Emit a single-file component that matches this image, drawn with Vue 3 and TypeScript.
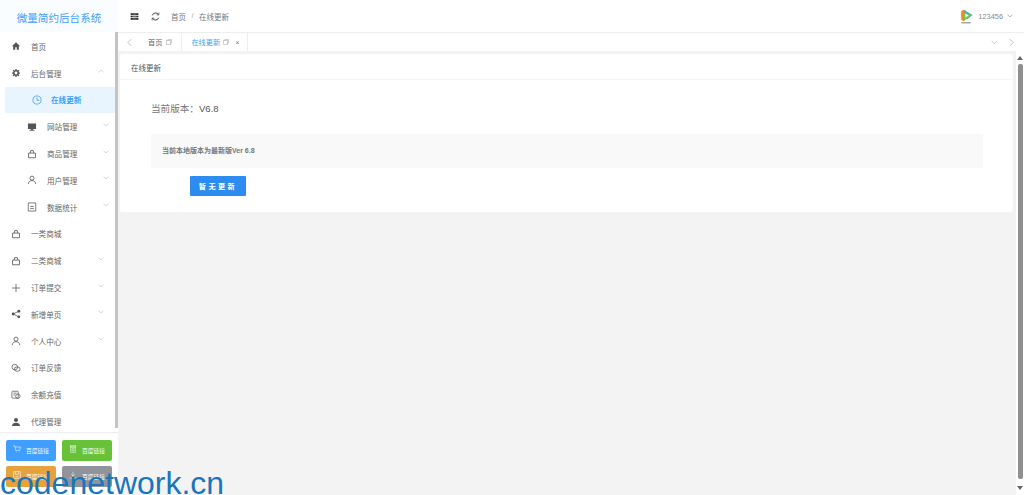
<script setup lang="ts">
interface MenuItem {
  label: string
  icon: string
  arrow?: "up" | "down"
  sub?: boolean
  active?: boolean
}

const menu: MenuItem[] = [
  { label: "首页", icon: "home" },
  { label: "后台管理", icon: "gear", arrow: "up" },
  { label: "在线更新", icon: "clock", sub: true, active: true },
  { label: "网站管理", icon: "monitor", arrow: "down", sub: true },
  { label: "商品管理", icon: "bag", arrow: "down", sub: true },
  { label: "用户管理", icon: "user", arrow: "down", sub: true },
  { label: "数据统计", icon: "doc", arrow: "down", sub: true },
  { label: "一类商城", icon: "bag" },
  { label: "二类商城", icon: "bag", arrow: "down" },
  { label: "订单提交", icon: "plus", arrow: "down" },
  { label: "新增单页", icon: "share", arrow: "down" },
  { label: "个人中心", icon: "user", arrow: "down" },
  { label: "订单反馈", icon: "chat" },
  { label: "余额充值", icon: "wallet" },
  { label: "代理管理", icon: "person" },
]

const quick = [
  { color: "#409eff", icon: "cart" },
  { color: "#67c23a", icon: "cup" },
  { color: "#e6a23c", icon: "save" },
  { color: "#909399", icon: "down" },
]
</script>

<template>
  <div class="page">
    <aside class="side">
      <div class="brand">微量简约后台系统</div>
      <div class="menu-wrap">
        <ul class="menu">
          <li v-for="item in menu" :key="item.label" class="row" :class="{ sub: item.sub, active: item.active }">
            <svg class="ico" viewBox="0 0 16 16">
              <path v-if="item.icon === 'home'" d="M8 2 1.500 8.500h2V14h3.300v-4h2.400v4h3.300V8.500h2z" fill="currentColor" />
              <g v-else-if="item.icon === 'gear'">
                <circle cx="8" cy="8" r="3.500" fill="none" stroke="currentColor" stroke-width="2.400" />
                <path d="M8 1.500V4M8 12v2.500M1.500 8H4M12 8h2.500M3.400 3.400l1.700 1.700M10.900 10.900l1.700 1.700M3.400 12.600l1.700-1.700M10.900 5.100l1.700-1.700" stroke="currentColor" stroke-width="2" />
              </g>
              <g v-else-if="item.icon === 'clock'" fill="none" stroke="currentColor" stroke-width="1.300">
                <circle cx="8" cy="8" r="6.500" />
                <path d="M8 4v4.500h3.500" />
              </g>
              <path v-else-if="item.icon === 'monitor'" d="M1.500 2.500h13V11H9.500v1.500H12V14H4v-1.500h2.500V11h-5z" fill="currentColor" />
              <path v-else-if="item.icon === 'bag'" d="M2.500 6.500h11V14h-11zM5 6.500 6 2.500h4l1 4" fill="none" stroke="currentColor" stroke-width="1.300" />
              <g v-else-if="item.icon === 'user'" fill="none" stroke="currentColor" stroke-width="1.300">
                <circle cx="8" cy="5" r="3.200" />
                <path d="M2 14.500c.5-3.800 2.800-5.500 6-5.500s5.500 1.700 6 5.500" />
              </g>
              <path v-else-if="item.icon === 'doc'" d="M2 1.500h12v13H2zM5 7h6M5 10.500h6" fill="none" stroke="currentColor" stroke-width="1.200" />
              <path v-else-if="item.icon === 'plus'" d="M8 1.500v13M1.500 8h13" fill="none" stroke="currentColor" stroke-width="1.200" />
              <g v-else-if="item.icon === 'share'" fill="currentColor">
                <circle cx="3.500" cy="8" r="2.300" />
                <circle cx="12.500" cy="3.500" r="2.300" />
                <circle cx="12.500" cy="12.500" r="2.300" />
                <path d="M12.500 3.500 3.500 8l9 4.500" fill="none" stroke="currentColor" stroke-width="1.200" />
              </g>
              <g v-else-if="item.icon === 'chat'" fill="none" stroke="currentColor" stroke-width="1.200">
                <circle cx="6" cy="6.500" r="4.500" />
                <rect x="5.500" y="6.500" width="9" height="6.500" rx="3.200" />
              </g>
              <g v-else-if="item.icon === 'wallet'" fill="none" stroke="currentColor" stroke-width="1.200">
                <rect x="1.500" y="2" width="10" height="11" rx="1" />
                <path d="M4 5h5M4 8h3" />
                <circle cx="11" cy="10" r="3.500" />
              </g>
              <g v-else fill="currentColor">
                <circle cx="8" cy="4.800" r="3.300" />
                <path d="M1.500 14.500c0-3.800 2.800-5.500 6.500-5.500s6.500 1.700 6.500 5.500z" />
              </g>
            </svg>
            <span class="label">{{ item.label }}</span>
            <svg v-if="item.arrow" class="arrow" viewBox="0 0 10 6">
              <path :d="item.arrow === 'up' ? 'M1 5 5 1.500 9 5' : 'M1 1 5 4.500 9 1'" fill="none" stroke="currentColor" stroke-width="1" />
            </svg>
          </li>
        </ul>
        <div class="side-bar"></div>
      </div>
      <div class="quick">
        <a v-for="q in quick" :key="q.color" class="quick-btn" :style="{ background: q.color }">
          <svg class="quick-ico" viewBox="0 0 12 12" fill="none" stroke="#fff" stroke-width="0.800">
            <path v-if="q.icon === 'cart'" d="M.5 1h2l1.500 7h6l1.300-5H3M4.500 10.500h.8M9 10.500h.8" />
            <path v-else-if="q.icon === 'cup'" d="M2 .5h8V3H2zM2.500 3h7v8.500h-7zM4.500 5.500h3v3.500h-3z" />
            <path v-else-if="q.icon === 'save'" d="M1 1h10v10H1zM3.500 1v4h5V1M3.500 8.500h5" />
            <path v-else d="M6 1v6.500M3.500 5 6 7.500 8.500 5M1 10.500h10" />
          </svg>
          <span>百度链接</span>
        </a>
      </div>
    </aside>

    <div class="main">
      <header class="top">
        <svg class="fold" viewBox="0 0 12 10">
          <path d="M.5 .5h11v2.400H.5zM.5 3.800h11v2.400H.5zM.5 7.100h11v2.400H.5z" fill="#222" />
          <path d="M3 1.700h6M3 5h6M3 8.300h6" stroke="#fff" stroke-width="0.500" />
        </svg>
        <svg class="refresh" viewBox="0 0 12 12" fill="none" stroke="#333" stroke-width="1.200">
          <path d="M1.700 4.500A4.600 4.600 0 0 1 10 3.400M10.300 7.500A4.600 4.600 0 0 1 2 8.600" />
          <path d="M10.500 .8v3h-3M1.500 11.200v-3h3" stroke-width="0.900" />
        </svg>
        <nav class="crumb">
          <span>首页</span>
          <i>/</i>
          <span>在线更新</span>
        </nav>
        <div class="user">
          <svg class="logo" viewBox="0 0 14 16">
            <path d="M1.500 1.500 6 .8l-1 12-3.500-.8Q.7 7 1.500 1.500z" fill="#f08a24" />
            <path d="M4 .8 13.500 6.500 8 11z" fill="#31b4ec" />
            <path d="M3.500 13 13.500 6.500 4 4.500z" fill="#7cc243" />
            <path d="M5.800 4.800 9.300 7 5.800 9.200z" fill="#fff" />
            <path d="M1.500 14.800h10" stroke="#888" stroke-width="1.200" />
          </svg>
          <span>123456</span>
          <svg class="user-arrow" viewBox="0 0 10 6">
            <path d="M1 1 5 4.500 9 1" fill="none" stroke="#888" stroke-width="1" />
          </svg>
        </div>
      </header>

      <div class="tabs">
        <svg class="tab-nav" viewBox="0 0 6 10"><path d="M5 1 1 5l4 4" /></svg>
        <div class="tab">
          <span>首页</span>
          <svg class="copy" viewBox="0 0 8 8"><path d="M.5 2H6v5.500H.5zM2.500 2V.5h5v5H6" /></svg>
        </div>
        <div class="tab current">
          <span>在线更新</span>
          <svg class="copy" viewBox="0 0 8 8"><path d="M.5 2H6v5.500H.5zM2.500 2V.5h5v5H6" /></svg>
          <span class="close">×</span>
        </div>
        <div class="tabs-right">
          <svg class="tab-down" viewBox="0 0 10 6"><path d="M1 1 5 4.500 9 1" /></svg>
          <svg class="tab-nav" viewBox="0 0 6 10"><path d="M1 1l4 4-4 4" /></svg>
        </div>
      </div>

      <div class="body">
        <section class="card">
          <div class="card-head">在线更新</div>
          <div class="card-body">
            <h2 class="version">当前版本：<b>V6.8</b></h2>
            <div class="notice">当前本地版本为最新版Ver 6.8</div>
            <button class="update" type="button">暂无更新</button>
          </div>
        </section>
        <div class="page-bar">
          <span class="up"></span>
          <span class="thumb"></span>
          <span class="down"></span>
        </div>
      </div>
    </div>

    <div class="mark">codenetwork.cn</div>
  </div>
</template>

<style>
html,
body {
  margin: 0;
  overflow: hidden;
}
</style>

<style scoped>
.page {
  position: relative;
  display: flex;
  width: 1024px;
  height: 495px;
  overflow: hidden;
  background: #f3f3f3;
  font-family: "Liberation Sans", "Noto Sans CJK SC", sans-serif;
  color: #555;
}

.side {
  display: flex;
  flex-direction: column;
  flex: none;
  width: 118px;
  background: #fff;
}

.brand {
  flex: none;
  height: 32px;
  line-height: 36px;
  text-align: center;
  font-size: 10.600px;
  color: #409eff;
  background: #fafdff;
}

.menu-wrap {
  position: relative;
  flex: none;
  height: 400px;
  overflow: hidden;
  border-bottom: 1px solid #eee;
}

.menu {
  margin: 0;
  padding: 1px 0 0;
  list-style: none;
}

.row {
  display: flex;
  align-items: center;
  height: 26.800px;
  padding-left: 11px;
  font-size: 7.600px;
  color: #666;
}

.row.sub {
  box-sizing: border-box;
  width: 110px;
  margin-left: 5px;
  padding-left: 22px;
}

.row.active {
  padding-left: 27px;
  background: #e8f5ff;
  color: #409eff;
  font-weight: 700;
}

.ico {
  flex: none;
  width: 10px;
  height: 10px;
  color: #555;
}

.row.active .ico {
  color: #409eff;
}

.label {
  margin-left: 10px;
}

.row.active .label {
  margin-left: 9px;
}

.arrow {
  position: absolute;
  left: 98px;
  width: 6px;
  height: 4px;
  margin-top: -4px;
  color: #bbb;
}

.row.sub .arrow {
  left: 103px;
}

.side-bar {
  position: absolute;
  top: 0;
  left: 115px;
  width: 3px;
  height: 396px;
  background: #c4c4c4;
}

.quick {
  display: grid;
  grid-template-columns: 50px 50px;
  grid-auto-rows: 21px;
  gap: 5px 6px;
  flex: 1;
  padding: 7px 6px;
  background: #fff;
}

.quick-btn {
  display: flex;
  align-items: center;
  justify-content: center;
  border-radius: 2px;
  font-size: 5.800px;
  color: #fff;
}

.quick-ico {
  width: 8px;
  height: 8px;
  margin: -3px 5px 0 0;
}

.main {
  display: flex;
  flex-direction: column;
  flex: 1;
  min-width: 0;
}

.top {
  display: flex;
  align-items: center;
  flex: none;
  height: 32px;
  padding: 0 11px 0 12px;
  background: #fff;
  border-bottom: 1px solid #eee;
}

.fold {
  width: 9px;
  height: 7px;
}

.refresh {
  width: 9px;
  height: 9px;
  margin-left: 12px;
}

.crumb {
  display: flex;
  gap: 5.500px;
  margin-left: 11px;
  font-size: 7.500px;
  color: #777;
}

.crumb i {
  font-style: normal;
  color: #aaa;
}

.user {
  display: flex;
  align-items: center;
  margin-left: auto;
  font-size: 7.400px;
  color: #888;
}

.logo {
  width: 13px;
  height: 15px;
  margin-right: 5px;
}

.user-arrow {
  width: 6px;
  height: 4px;
  margin-left: 4px;
}

.tabs {
  display: flex;
  align-items: center;
  flex: none;
  height: 18px;
  background: #fff;
  font-size: 7.200px;
  color: #666;
}

.tab-nav {
  width: 5px;
  height: 9px;
  margin: 0 9px;
  fill: none;
  stroke: #aaa;
  stroke-width: 0.900;
}

.tab {
  display: flex;
  align-items: center;
  height: 100%;
  padding: 0 9px 0 7px;
  border-right: 1px solid #eee;
}

.tab.current {
  padding: 0 8px 0 9px;
  color: #409eff;
}

.copy {
  width: 6px;
  height: 6px;
  margin-left: 4px;
  fill: none;
  stroke: #aaa;
  stroke-width: 0.800;
}

.tab.current .copy {
  margin-left: 3px;
}

.close {
  margin-left: 6px;
  color: #777;
}

.tabs-right {
  display: flex;
  align-items: center;
  margin-left: auto;
}

.tab-down {
  width: 7px;
  height: 5px;
  fill: none;
  stroke: #aaa;
  stroke-width: 0.900;
}

.tabs-right .tab-nav {
  margin: 0 10px 0 11px;
}

.body {
  position: relative;
  flex: 1;
  min-height: 0;
  padding-top: 3px;
}

.card {
  width: 893px;
  margin-left: 2px;
  background: #fff;
  border-radius: 2px;
}

.card-head {
  box-sizing: border-box;
  height: 26px;
  line-height: 29px;
  padding-left: 11px;
  font-size: 7.500px;
  color: #555;
  border-bottom: 1px solid #f6f6f6;
}

.card-body {
  padding: 17px 30px 16px 31px;
}

.version {
  margin: 0;
  font-size: 9.600px;
  font-weight: 400;
  line-height: 24px;
  color: #777;
}

.version b {
  font-weight: 400;
  color: #555;
}

.notice {
  height: 34px;
  margin-top: 13px;
  padding-left: 11px;
  line-height: 34px;
  font-size: 7px;
  font-weight: 700;
  color: #777;
  background: #f9f9f9;
}

.update {
  display: block;
  width: 56px;
  height: 20px;
  margin: 8px 0 0 39px;
  padding: 0;
  border: 0;
  border-radius: 1px;
  background: #2d8cf0;
  color: #fff;
  font: 700 7.200px "Liberation Sans", "Noto Sans CJK SC", sans-serif;
  letter-spacing: 2.400px;
}

.page-bar {
  position: absolute;
  top: 0;
  right: 0;
  bottom: 0;
  display: flex;
  flex-direction: column;
  align-items: center;
  width: 8px;
  background: #fff;
}

.up,
.down {
  flex: none;
  width: 0;
  border: 3px solid transparent;
}

.up {
  margin-top: 5px;
  border-top: 0;
  border-bottom: 4px solid #666;
}

.thumb {
  flex: none;
  width: 5px;
  height: 415px;
  margin-top: 4px;
  border-radius: 2px;
  background: #8f8f8f;
}

.down {
  margin-top: 7px;
  border-bottom: 0;
  border-top: 4px solid #666;
}

.mark {
  position: absolute;
  left: 0;
  bottom: 0;
  font-size: 32px;
  line-height: 24px;
  color: #1b75bc;
}
</style>
